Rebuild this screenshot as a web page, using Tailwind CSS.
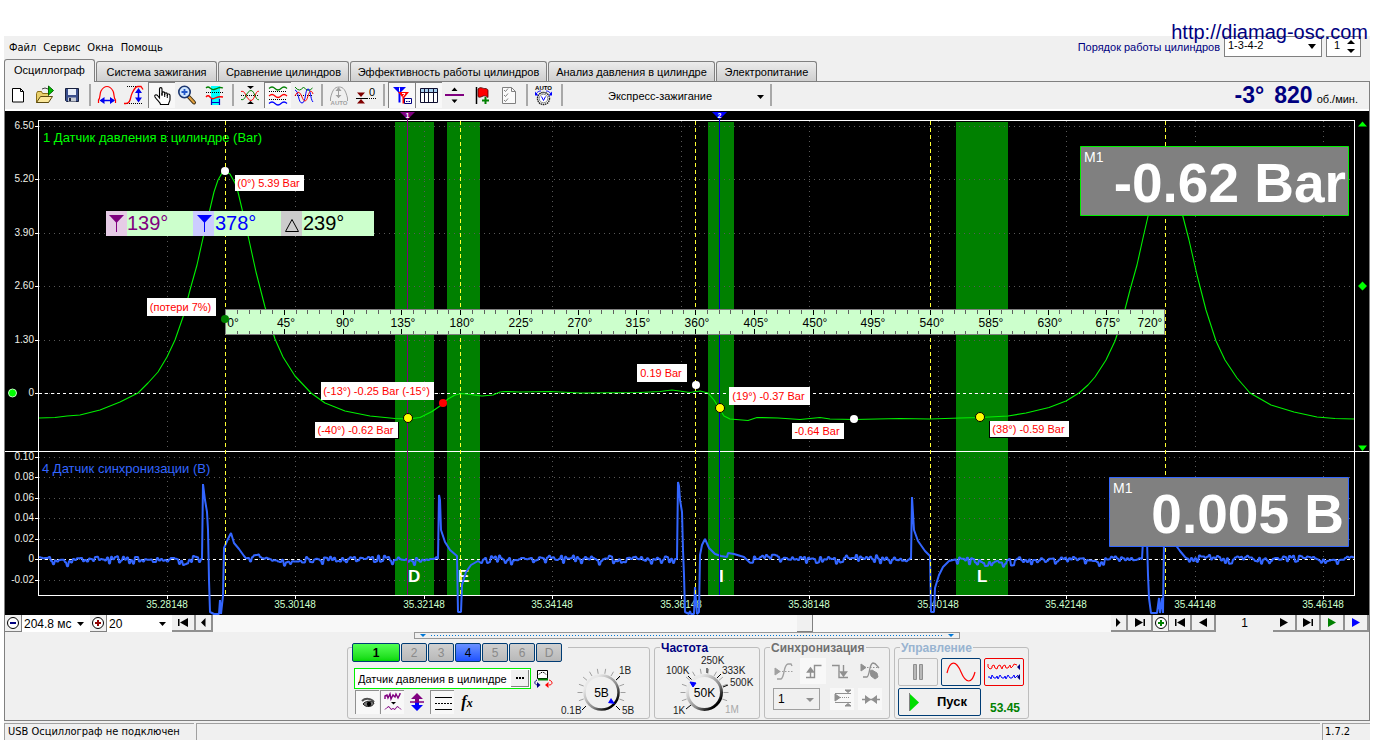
<!DOCTYPE html>
<html lang="ru">
<head>
<meta charset="utf-8">
<title>Diamag — осциллограф</title>
<script src="https://cdn.jsdelivr.net/npm/@tailwindcss/browser@4"></script>
</head>
<body class="bg-white font-['Liberation_Sans',sans-serif] text-[12px] leading-4 text-black">
<div class="relative ml-1 mr-3 pt-9">
  <a href="http://diamag-osc.com" class="absolute right-[2px] top-5 z-10 text-[20px] leading-6 text-[#000080]">http://diamag-osc.com</a>

  <header class="flex h-[23px] items-start justify-between bg-[#f0f0f0]">
    <nav class="flex gap-[7px] pl-[5px] pt-1 font-['DejaVu_Sans_Condensed','DejaVu_Sans',sans-serif] text-[11px]">
      <button>Файл</button><button>Сервис</button><button>Окна</button><button>Помощь</button>
    </nav>
    <div class="flex items-start gap-1 pr-[9px]">
      <label for="order" class="pt-[3px] text-[11px] text-[#000080]">Порядок работы цилиндров</label>
      <div class="relative">
        <select id="order" class="h-[21px] w-[98px] appearance-none border border-[#808080] bg-white pl-[3px] pb-[3px] text-[11px] text-black"><option>1-3-4-2</option></select>
        <svg class="pointer-events-none absolute right-[6px] top-2" width="8" height="5"><path d="M0 0h8L4 5z"/></svg>
      </div>
      <div class="relative">
        <input id="cyl" aria-label="Цилиндр" value="1" class="h-[21px] w-[35px] border border-[#808080] bg-white pb-[3px] pl-[7px] text-[11px]">
        <svg class="pointer-events-none absolute right-[6px] top-[4px]" width="8" height="13"><path d="M0 4h8L4 0zM0 9h8L4 13z"/></svg>
      </div>
    </div>
  </header>

  <div role="tablist" class="flex h-[22px] items-end gap-px bg-[#f0f0f0]">
    <button role="tab" aria-selected="true" class="relative z-[1] -mb-px h-[23px] w-[91px] rounded-t-[3px] border border-b-0 border-[#808080] bg-[#f0f0f0] pb-[2px] text-[11px]">Осциллограф</button>
    <button role="tab" class="h-5 w-[121px] rounded-t-[3px] border border-b-0 border-[#808080] bg-linear-to-b from-[#ececec] to-[#cfcfcf] text-[11px]">Система зажигания</button>
    <button role="tab" class="h-5 w-[131px] rounded-t-[3px] border border-b-0 border-[#808080] bg-linear-to-b from-[#ececec] to-[#cfcfcf] text-[11px]">Сравнение цилиндров</button>
    <button role="tab" class="h-5 w-[197px] rounded-t-[3px] border border-b-0 border-[#808080] bg-linear-to-b from-[#ececec] to-[#cfcfcf] text-[11px]">Эффективность работы цилиндров</button>
    <button role="tab" class="h-5 w-[167px] rounded-t-[3px] border border-b-0 border-[#808080] bg-linear-to-b from-[#ececec] to-[#cfcfcf] text-[11px]">Анализ давления в цилиндре</button>
    <button role="tab" class="h-5 w-[101px] rounded-t-[3px] border border-b-0 border-[#808080] bg-linear-to-b from-[#ececec] to-[#cfcfcf] text-[11px]">Электропитание</button>
  </div>

  <main class="border border-[#808080] bg-[#f0f0f0]">
    <div role="toolbar" class="flex h-[29px] items-start border-b-2 border-white">
      <button aria-label="Новый"><svg class="block" width="27" height="26" viewBox="5 82 27 26"><path d="M12.500 88.500h8l3 3v10.500h-11z" fill="#fff" stroke="#000"/><path d="M20.500 88.500v3h3" fill="none" stroke="#000"/></svg></button>
      <button aria-label="Открыть"><svg class="block" width="27" height="26" viewBox="32 82 27 26"><path d="M36.500 102.500v-9l1-2h4l1 2h6v9z" fill="#e8cf6a" stroke="#8a6d16"/><path d="M36.500 102.500l4-6h12l-4 6z" fill="#fbe79a" stroke="#5b4a10"/><path d="M42 89l3-1 3 1" fill="none" stroke="#444"/><path d="M48.500 86v9l5-4.500z" fill="#00c000" stroke="#006000"/></svg></button>
      <button aria-label="Сохранить"><svg class="block" width="27" height="26" viewBox="59 82 27 26"><path d="M65.500 88.500h13v13h-12l-1-1z" fill="#3a4e8c" stroke="#18203c"/><path d="M68 89h8v6h-8z" fill="#e8eef8"/><path d="M68 97.500h8v4h-8z" fill="#c8ccd4"/><path d="M69 98h2v3h-2z" fill="#202840"/></svg></button>
      <span class="mx-[3px] mt-[2px] h-[22px] w-[2px] bg-[#a8a8a8]"></span>
      <button aria-label="Растянуть по горизонтали"><svg class="block" width="27" height="26" viewBox="94 82 27 26" fill="none"><path d="M98.500 103v-3c2-2 1-6 2.500-9 2-3.500 4-4.500 6-4.500s4 1 6 4.500c1.500 3 .5 7 2.500 9v3" stroke="#f00" stroke-width="1.200"/><path d="M101 100.500h13" stroke="#0000f0" stroke-width="1.500"/><path d="M99.500 100.500l5-3.500v7zM115 100.500l-5-3.500v7z" fill="#0000f0"/></svg></button>
      <button aria-label="Растянуть по вертикали"><svg class="block" width="27" height="26" viewBox="121 82 27 26" fill="none"><path d="M127 86.500h9M127 103.500h16" stroke="#000" stroke-dasharray="1 1"/><path d="M124 103.500h2c5 0 4-6 6-10s3-7 6-7h3l2 3" stroke="#f00" stroke-width="1.300"/><path d="M138.500 90v10" stroke="#0000f0" stroke-width="1.500"/><path d="M138.500 88l-3.500 5h7zM138.500 102.500l-3.500-5h7z" fill="#0000f0"/></svg></button>
      <button aria-label="Рука" aria-pressed="true" class="border-l border-t border-[#808080] bg-[#f8f8f8]"><svg class="block" width="26" height="25" viewBox="149 83 26 25"><path d="M159.500 98v-9c0-1.800 2.500-1.800 2.500 0v6-2c0-1.500 2.700-1.500 2.700 0v2-1c0-1.500 2.600-1.500 2.600.3v1.700-1c0-1.500 2.700-1.500 2.700.5v4c0 2-1.500 3-1.500 5h-8c0-2-3.500-4-5.500-7.500-1-2 1-3 2.500-1.500z" fill="#fff" stroke="#000" stroke-width="1.100"/><path d="M162 96v-3M164.700 97v-3M167.300 98v-3" stroke="#000"/></svg></button>
      <button aria-label="Лупа"><svg class="block" width="27" height="26" viewBox="175 82 27 26"><path d="M188 96l6 6.500" stroke="#3a2a10" stroke-width="4" stroke-linecap="round"/><path d="M189 97l5 5.500" stroke="#e0a040" stroke-width="2" stroke-linecap="round"/><circle cx="184.500" cy="92" r="5.700" fill="#cfe6ff" stroke="#1b3670" stroke-width="1.600"/><path d="M184.500 89v6M181.500 92h6" stroke="#2458c8" stroke-width="1.800"/></svg></button>
      <button aria-label="Фрагмент"><svg class="block" width="27" height="26" viewBox="202 82 27 26" fill="none"><path d="M211 86h9v19h-9z" fill="#0ff"/><path d="M206 88q2-2 4 0t4 1.500 4-1.500 5 0" stroke="#008000" stroke-width="1.300"/><path d="M206 92.500h18" stroke="#000" stroke-dasharray="1 1"/><path d="M206 97q2-2.500 4 0t4 1.500 4-1.500 5 0" stroke="#f00" stroke-width="1.300"/><path d="M211.500 99v6M219.500 99v6M212 102.500h7" stroke="#0000c0" stroke-width="1.200"/></svg></button>
      <span class="mx-[3px] mt-[2px] h-[22px] w-[2px] bg-[#a8a8a8]"></span>
      <button aria-label="Совместить"><svg class="block" width="27" height="26" viewBox="237 82 27 26" fill="none"><path d="M247 86h7l-3.500 3zM247 104h7l-3.500-3z" fill="#000"/><path d="M241 95.500h18" stroke="#000" stroke-dasharray="1 1"/><path d="M241 91.500c3-1 4 2 5 4s3 5 5 5 3-3 4-5 2-5 4-4" stroke="#f00"/><path d="M241 99.500c3 1 4-2 5-4s3-5 5-5 3 3 4 5 2 5 4 4" stroke="#008000"/></svg></button>
      <button aria-label="Разнести" aria-pressed="true" class="border-l border-t border-[#808080] bg-[#f8f8f8]"><svg class="block" width="26" height="25" viewBox="265 83 26 25" fill="none"><path d="M269 88.500q3-3 6 0t6 0 6 0" stroke="#008000" stroke-width="1.200"/><path d="M269 91.500h18M269 99.500h18" stroke="#000" stroke-dasharray="1 1"/><path d="M269 96q3-3 6 0t6 0 6 0" stroke="#f00" stroke-width="1.200"/><path d="M269 103.500q3-3 6 0t6 0 6 0" stroke="#00f" stroke-width="1.200"/></svg></button>
      <button aria-label="Наложить"><svg class="block" width="27" height="26" viewBox="291 82 27 26" fill="none"><path d="M295 87q4.500 6 8.500 0 4.500 6 9 1" stroke="#008000"/><path d="M295 95.500h18" stroke="#000" stroke-dasharray="1 1"/><path d="M295 90c4 1 3 13 7 13s3-14 6-14 2 10 5 13" stroke="#00f"/><path d="M295 96c3-6 5-4 7 1s4 6 6-1 4-5 5-2" stroke="#f00"/></svg></button>
      <span class="mx-[3px] mt-[2px] h-[22px] w-[2px] bg-[#a8a8a8]"></span>
      <button aria-label="Авто масштаб"><svg class="block" width="27" height="26" viewBox="326 82 27 26" fill="none"><path d="M330.500 101v-3c2-8 4-11 8.500-11s6.500 3 8.500 11v3" stroke="#a0a0a0"/><path d="M338.500 88v10" stroke="#a0a0a0"/><path d="M338.500 87l-3 4h6zM338.500 98l-3-3h6z" fill="#a0a0a0"/><text x="339" y="104.500" text-anchor="middle" font-size="6" font-weight="700" fill="#a0a0a0">AUTO</text></svg></button>
      <button aria-label="Обнулить"><svg class="block" width="27" height="26" viewBox="353 82 27 26"><path d="M357 92.500h8l-4 4.500zM357 103.500h8l-4-4.500z" fill="#800000"/><path d="M356 98.500h11" stroke="#000"/><path d="M367 98.500h9" stroke="#000" stroke-dasharray="1 1"/><text x="369" y="96" font-size="11">0</text></svg></button>
      <span class="mx-[3px] mt-[2px] h-[22px] w-[2px] bg-[#a8a8a8]"></span>
      <button aria-label="Маркеры" aria-pressed="true" class="border-l border-t border-[#808080] bg-[#f8f8f8]"><svg class="block" width="26" height="25" viewBox="389 83 26 25"><path d="M393 87h13l-5.500 5.500v10h-2v-10z" fill="#00f"/><path d="M398 92h11l-4.500 5.500v6h-2v-6z" fill="#f00"/><path d="M399.500 87.500v4M402 93.500h3l-2 3" stroke="#fff" fill="none"/><path d="M404.500 98.500h7v5h-7z" fill="#fff" stroke="#000080"/><path d="M406 101.500h4.500" stroke="#000080" stroke-dasharray="1.500 1"/></svg></button>
      <button aria-label="Таблица" aria-pressed="true" class="border-l border-t border-[#808080] bg-[#f8f8f8]"><svg class="block" width="26" height="25" viewBox="416 83 26 25"><path d="M420.500 88.500h17v14h-17z" fill="#fff" stroke="#101030"/><path d="M421 89h16v3.500h-16z" fill="#a8d0f0"/><path d="M420.500 92.500h17M424.500 89v14M428.500 89v14M433.500 89v14" stroke="#101030"/></svg></button>
      <button aria-label="Разделитель"><svg class="block" width="27" height="26" viewBox="442 82 27 26"><path d="M445 94h19v2h-19z" fill="#800080"/><path d="M451.500 91h6l-3-3.500zM451.500 99.500h6l-3 3.500z"/></svg></button>
      <button aria-label="Флаг"><svg class="block" width="27" height="26" viewBox="469 82 27 26"><path d="M476.500 87v17" stroke="#000" stroke-width="1.500"/><path d="M478 89c3-3 5 0 7-.5 2 0 3 1 3 2v7c-2-2-4-2-6-1s-3 1-4 0z" fill="#f00" stroke="#400" stroke-width=".8"/><path d="M485.500 97v7M482 100.500h7" stroke="#008000" stroke-width="2"/></svg></button>
      <button aria-label="Список"><svg class="block" width="27" height="26" viewBox="496 82 27 26" fill="none" stroke="#808080"><path d="M502.500 87.500h9l4 4v12h-13z" fill="#fafafa"/><path d="M511.500 87.500v4h4"/><path d="M504 90l1.500 1.500 2.500-3M504 95l1.500 1.500 2.500-3M504 100l1.500 1.500 2.500-3"/></svg></button>
      <span class="mx-[3px] mt-[2px] h-[22px] w-[2px] bg-[#a8a8a8]"></span>
      <button aria-label="Авто настройка"><svg class="block" width="27" height="26" viewBox="531 82 27 26" fill="none"><text x="543.500" y="90" text-anchor="middle" font-size="6" font-weight="700" fill="#000">AUTO</text><circle cx="543.500" cy="98.500" r="6" fill="#fff" stroke="#222" stroke-dasharray="1.500 .6" stroke-width="1.400"/><circle cx="543.500" cy="98.500" r="4.300" stroke="#888"/><path d="M541.500 96.500l2 4 2-4" stroke="#00f"/><path d="M536 94c2-3 4-3 5-3M551 94c-2-3-4-3-5-3" stroke="#00f"/><path d="M535 91.500v4h3.500zM552 91.500v4h-3.500z" fill="#00f"/></svg></button>
      <span class="mx-[3px] mt-[2px] h-[22px] w-[2px] bg-[#a8a8a8]"></span>
      <div class="relative">
        <select aria-label="Режим" class="h-[27px] w-[203px] appearance-none bg-transparent pl-[42px] text-[11px]"><option>Экспресс-зажигание</option></select>
        <svg class="pointer-events-none absolute right-[5px] top-[13px]" width="7" height="4"><path d="M0 0h7L3.500 4z"/></svg>
      </div>
      <span class="mx-px mt-[2px] h-[22px] w-[2px] bg-[#a8a8a8]"></span>
      <div class="ml-auto flex items-baseline pr-[11px] text-[#000080]">
        <strong class="mr-[10px] text-[23px] leading-[26px]">-3°</strong><strong class="mr-1 text-[23px] leading-[26px]">820</strong><span class="text-[11px] text-black">об./мин.</span>
      </div>
    </div>

    <svg class="block h-auto w-full bg-black" viewBox="5 111 1364 504" id="scope">
      <g fill="#008000"><path d="M395 122h39v473h-39zM447 122h33v473h-33zM708 122h26v473h-26zM956 122h52v473h-52z"/></g>
      <g id="grid" stroke="#585858" stroke-dasharray="1 4" shape-rendering="crispEdges"></g>
      <g stroke="#fff" fill="none" shape-rendering="crispEdges">
        <path d="M38.500 595.500V120.500H1354.500V595.500zM5 451.500H1369"/>
        <path id="ticks"/>
        <path d="M39 393.500H1354M39 559.500H1354" stroke-dasharray="3 3"/>
      </g>
      <text x="43" y="142" font-size="13" fill="#00ff00">1 Датчик давления в цилиндре (Bar)</text>
      <text x="42" y="473" font-size="13" fill="#3366ff">4 Датчик синхронизации (B)</text>
      <g id="ylabels" font-size="10" fill="#f0f0e8" text-anchor="end"></g>
      <g id="xlabels" font-size="10" fill="#ccffcc" text-anchor="middle"></g>
      <g fill="#fff" font-size="17" font-weight="700"><text x="408" y="582">D</text><text x="458" y="582">E</text><text x="719" y="582">I</text><text x="977" y="582">L</text></g>
      <path id="sync" fill="none" stroke="#3366ff" stroke-width="2" stroke-linejoin="bevel"/>
      <path d="M225.500 121V595M460.500 121V595M695.500 121V595M930.500 121V595M1165.500 121V595" stroke="#ffff33" stroke-dasharray="4 3" shape-rendering="crispEdges"/>
      <path d="M407.500 118V595" stroke="#800080"/><path d="M719.500 118V595" stroke="#0000c0"/>
      <path d="M400 112h15l-7.500 7.500z" fill="#800080"/><path d="M712 112h15l-7.500 7.500z" fill="#00f"/>
      <g fill="#fff" font-size="7" font-weight="700" text-anchor="middle"><text x="407.500" y="118">1</text><text x="719.500" y="118">2</text></g>
      <path fill="none" stroke="#00f000" stroke-width="1.100" stroke-linejoin="round" d="M39 418L55 417.500 67 416 80 415 100 410 120 402 138 393 148 383 158 372 167 357 175 340 183 317 190 290 197 265 203 238 210 209 214 192 218 180 222 173 225 171 230 174 235 183 238 192 242 209 249 240 256 272 265 307 275 339 283 357 295 376 311 393 325 403 345 411 370 416 395 418.500 408 419 420 417.500 432 411.500 440 406 448 399 455 395 462 393.500 470 394.500 482 396 493 395 500 392 505 391.500 520 392 550 391.500 580 393 640 392.500 660 391.500 672 390 690 392.500 700 391 708 393 714 400 719 408 724 416 730 419 748 420.500 757 417.500 778 418 800 419.500 820 417.500 830 419 854 419.500 900 418.500 930 419 960 418 980 417.500 1008 416 1026 413 1049 407.500 1066 401 1079 393 1088 385 1095 377 1106 360 1115 341 1123 317 1130 290 1137 265 1143 238 1149 212 1157 181 1165 171 1173 181 1181 209 1189 240 1197 275 1206 310 1216 341 1225 360 1237 378 1250 393 1271 405 1294 412 1317 417 1335 418.500 1354 419"/>
      <g fill="#00ff00"><path d="M1358 126.500h9l-4.500-5zM1358 445.500h9l-4.500 5.500zM1362.500 281.500l4.500 4.500-4.500 4.500-4.500-4.500z"/><circle cx="12.500" cy="393" r="4" stroke="#bfffbf"/></g>

      <g><path d="M106 211h268v25h-268z" fill="#ccffcc"/><path d="M106 211h21v25h-21z" fill="#e6cce6"/><path d="M193 211h21v25h-21z" fill="#ccccff"/><path d="M281 211h21v25h-21z" fill="#ccc"/>
        <path d="M109 215h15l-7.500 8z" fill="#800080"/><path d="M116.500 222v10" stroke="#800080"/><path d="M197 215h15l-7.500 8z" fill="#00f"/><path d="M204.500 222v10" stroke="#00f"/><path d="M285.500 231.500h13l-6.500-12z" fill="none" stroke="#000"/>
        <g font-size="20"><text x="127" y="230" fill="#800080">139°</text><text x="215" y="230" fill="#00f">378°</text><text x="303" y="230">239°</text></g></g>

      <path d="M225.500 309.500h939v25h-939z" fill="#ccffcc" stroke="#808080"/>
      <path id="minor" stroke="#606060" shape-rendering="crispEdges"/><path id="major" stroke="#000" shape-rendering="crispEdges"/>
      <g id="degrees" font-size="12" text-anchor="middle"></g>

      <g id="notes" font-size="11" fill="#ff0000"></g>
      <g fill="#fff"><circle cx="225" cy="171" r="4"/><circle cx="696" cy="385" r="4"/><circle cx="854" cy="419" r="4"/></g>
      <circle cx="225" cy="319" r="4" fill="#008000"/><circle cx="443" cy="403" r="4" fill="#f00"/>
      <g fill="#ff0" stroke="#000"><circle cx="408" cy="418" r="4.500"/><circle cx="720" cy="408" r="4.500"/><circle cx="980" cy="417" r="4.500"/></g>

      <path d="M1080.500 146.500h268v69h-268z" fill="#808080" stroke="#00f000"/><path d="M1109.500 477.500h239v69h-239z" fill="#808080" stroke="#3366ff"/>
      <g fill="#fff"><text x="1084" y="162" font-size="14">M1</text><text x="1113" y="493" font-size="14">M1</text>
      <text x="1346" y="202" font-size="55" font-weight="700" text-anchor="end">-0.62 Bar</text><text x="1344" y="533" font-size="55" font-weight="700" text-anchor="end">0.005 B</text></g>
    </svg>

    <div class="flex h-[17px] items-stretch text-[12px]">
      <button aria-label="Уменьшить" class="w-[17px] border-b border-r border-[#808080] bg-[#f0f0f0]"><svg class="block" width="16" height="16"><circle cx="8" cy="8" r="5.500" fill="#fff" stroke="#000"/><path d="M5 8h6" stroke="#000080" stroke-width="2"/></svg></button>
      <div class="relative"><select aria-label="Развёртка" class="h-[17px] w-[68px] appearance-none bg-white pl-[2px] text-[12px]"><option>204.8 мс</option></select><svg class="pointer-events-none absolute right-[6px] top-[7px]" width="7" height="4"><path d="M0 0h7L3.500 4z"/></svg></div>
      <button aria-label="Увеличить" class="w-[17px] border-b border-r border-[#808080] bg-[#f0f0f0]"><svg class="block" width="16" height="16"><circle cx="8" cy="8" r="5.500" fill="#fff" stroke="#000"/><path d="M5 8h6M8 5v6" stroke="#900000" stroke-width="2"/></svg></button>
      <div class="relative"><select aria-label="Масштаб" class="h-[17px] w-[65px] appearance-none bg-white pl-[2px] text-[12px]"><option>20</option></select><svg class="pointer-events-none absolute right-[6px] top-[7px]" width="7" height="4"><path d="M0 0h7L3.500 4z"/></svg></div>
      <button aria-label="В начало" class="flex w-[24px] items-center justify-center border-b-2 border-r-2 border-[#909090] bg-[#f0f0f0]"><svg width="12" height="9"><path d="M1 1h1.500v7H1zM11 0v9L3 4.500z"/></svg></button>
      <button aria-label="Назад" class="flex w-[17px] items-center justify-center border-b-2 border-r-2 border-[#909090] bg-[#f0f0f0]"><svg width="5" height="9"><path d="M4.500 0v9L0 4.500z"/></svg></button>
      <input type="range" aria-label="Прокрутка" min="0" max="1000" value="662" class="h-[17px] min-w-0 flex-1 appearance-none bg-[#f8f8f8] [&::-webkit-slider-thumb]:h-[17px] [&::-webkit-slider-thumb]:w-4 [&::-webkit-slider-thumb]:appearance-none [&::-webkit-slider-thumb]:border-b [&::-webkit-slider-thumb]:border-r [&::-webkit-slider-thumb]:border-[#808080] [&::-webkit-slider-thumb]:bg-[#f0f0f0]">
      <button aria-label="Вперёд" class="flex w-[17px] items-center justify-center border-b-2 border-r-2 border-[#909090] bg-[#f0f0f0]"><svg width="5" height="9"><path d="M0 0v9l4.500-4.500z"/></svg></button>
      <button aria-label="В конец" class="flex w-[25px] items-center justify-center border-b-2 border-r-2 border-[#909090] bg-[#f0f0f0]"><svg width="12" height="9"><path d="M9.500 1H11v7H9.500zM1 0v9l8-4.500z"/></svg></button>
      <button aria-label="Добавить" class="w-[16px] border-b border-r border-[#808080] bg-[#f0f0f0]"><svg class="block" width="16" height="16"><circle cx="8" cy="8" r="5.500" fill="#fff" stroke="#000"/><path d="M5 8h6M8 5v6" stroke="#008000" stroke-width="2"/></svg></button>
      <button aria-label="Первый кадр" class="flex w-[23px] items-center justify-center border-b-2 border-r-2 border-[#909090] bg-[#f0f0f0]"><svg width="12" height="9"><path d="M1 1h1.500v7H1zM11 0v9L3 4.500z"/></svg></button>
      <button aria-label="Предыдущий кадр" class="flex w-[24px] items-center justify-center border-b-2 border-r-2 border-[#909090] bg-[#f0f0f0]"><svg width="8" height="9"><path d="M8 0v9L0 4.500z"/></svg></button>
      <output class="w-[57px] text-center leading-[17px]">1</output>
      <button aria-label="Следующий кадр" class="flex w-[24px] items-center justify-center border-b-2 border-r-2 border-[#909090] bg-[#f0f0f0]"><svg width="8" height="9"><path d="M0 0v9l8-4.500z"/></svg></button>
      <button aria-label="Последний кадр" class="flex w-[24px] items-center justify-center border-b-2 border-r-2 border-[#909090] bg-[#f0f0f0]"><svg width="12" height="9"><path d="M9.500 1H11v7H9.500zM1 0v9l8-4.500z"/></svg></button>
      <button aria-label="Воспроизвести" class="flex w-[24px] items-center justify-center border-b-2 border-r-2 border-[#909090] bg-[#f0f0f0]"><svg width="8" height="9"><path d="M0 0v9l8-4.500z" fill="#008000"/></svg></button>
      <button aria-label="Воспроизвести быстро" class="flex w-[24px] items-center justify-center border-b-2 border-r-2 border-[#909090] bg-[#f0f0f0]"><svg width="8" height="9"><path d="M0 0v9l8-4.500z" fill="#00f"/></svg></button>
    </div>

    <button aria-label="Свернуть панель" class="mx-auto flex h-[7px] w-[546px] items-center gap-[5px] border border-[#989898] px-[5px]"><svg width="6" height="3"><path d="M0 0h6L3 3z" fill="#0078d7"/></svg><svg class="min-w-0 flex-1" height="1"><path d="M0 .5H2000" stroke="#0078d7" stroke-dasharray="1 2"/></svg><svg width="6" height="3"><path d="M0 0h6L3 3z" fill="#0078d7"/></svg></button>

    <div class="flex justify-center gap-1 pb-px pl-[2px] pt-2">
      <section class="flex h-[72px] w-[303px] rounded-[3px] border border-[#bdbdbd] pl-[4px]">
        <div class="w-[205px]">
          <div class="-mt-[5px] flex h-[19px] w-max gap-px bg-[#f0f0f0] pr-[6px] text-[12px] text-[#8a8a8a]">
            <button class="w-[48px] rounded-[2px] border border-[#003c74] bg-linear-to-b from-[#50ff50] to-[#00d800] font-bold text-black">1</button>
            <button class="w-[26px] rounded-[2px] border border-[#003c74] bg-linear-to-b from-[#d0d0d0] to-[#b8b8b8]">2</button>
            <button class="w-[26px] rounded-[2px] border border-[#003c74] bg-linear-to-b from-[#d0d0d0] to-[#b8b8b8]">3</button>
            <button class="w-[26px] rounded-[2px] border border-[#003c74] bg-linear-to-b from-[#6a90ff] to-[#2050ff] text-black">4</button>
            <button class="w-[26px] rounded-[2px] border border-[#003c74] bg-linear-to-b from-[#d0d0d0] to-[#b8b8b8]">5</button>
            <button class="w-[26px] rounded-[2px] border border-[#003c74] bg-linear-to-b from-[#d0d0d0] to-[#b8b8b8]">6</button>
            <button class="w-[26px] rounded-[2px] border border-[#003c74] bg-linear-to-b from-[#d0d0d0] to-[#b8b8b8]">D</button>
          </div>
          <div class="mt-[6px] flex items-center gap-[3px] pl-[2px]">
            <div class="flex h-[21px] w-[177px] items-stretch border border-[#00f000] bg-white p-px">
              <input aria-label="Датчик" value="Датчик давления в цилиндре" class="min-w-0 flex-1 pl-[2px] text-[11px]">
              <button aria-label="Выбрать датчик" class="flex w-[18px] items-center justify-center border-b border-r border-[#808080] bg-[#f0f0f0]"><svg width="8" height="2"><path d="M0 0h2v2H0zM3 0h2v2H3zM6 0h2v2H6z"/></svg></button>
            </div>
            <button aria-label="Инвертировать"><svg class="block" width="19" height="20" viewBox="535 669 19 20" fill="none"><path d="M538.500 670.500h10v8h-10z" fill="#fff" stroke="#000"/><path d="M540 674.500c2-3 5-3 7 0" stroke="#000" stroke-dasharray="1.500 1"/><path d="M539 679.500h10" stroke="#008000" stroke-width="2"/><path d="M538 680c-3 1-3 5 1 5" stroke="#000080"/><path d="M550 680c4 1 4 5 0 5" stroke="#f00"/><path d="M538 682v6l3.500-3z" fill="#000080"/><path d="M549.500 682v6l-3.500-3z" fill="#f00"/></svg></button>
          </div>
          <div class="mt-px flex gap-px pl-[3px]">
            <button aria-label="Видимость" aria-pressed="true" class="border-l border-t border-[#909090] bg-[#f8f8f8]"><svg class="block" width="23" height="23" viewBox="356 691 23 23"><path d="M362 701c3-3 9-3 12 1" fill="none" stroke="#505050" stroke-width="2"/><path d="M363 704c2-3 8-4 11-1-1 4-8 5-11 1z" fill="#777" stroke="#222"/><circle cx="369" cy="704" r="2.200"/></svg></button>
            <button aria-label="Фильтр" aria-pressed="true" class="border-l border-t border-[#909090] bg-[#f8f8f8]"><svg class="block" width="23" height="23" viewBox="381 691 23 23" fill="none" stroke="#800080"><path d="M385 699v-3l2-1 1 3 2-4 1 5 2-4 2 2 1-3 2 4 2-4v-1" stroke-width="1.400"/><path d="M391 702h5l-2.500 2.500z" fill="#000" stroke="none"/><path d="M385 709.500l2-2 2-1 2 3 2-1 2 1 2-3 2 1 2 2"/></svg></button>
            <button aria-label="Вертикальная шкала"><svg class="block" width="24" height="24" viewBox="405 690 24 24"><path d="M417 693l6 6h-4v3h-4v-3h-4z" fill="#800080"/><path d="M417 711l6-6h-4v-3h-4v3h-4z" fill="#00f"/><path d="M410 702h14" stroke="#800080" stroke-width="1.500"/></svg></button>
            <button aria-label="Линии" aria-pressed="true" class="border-l border-t border-[#909090] bg-[#f8f8f8]"><svg class="block" width="23" height="23" viewBox="431 691 23 23" stroke="#000"><path d="M435 697.500h17M435 709.500h17"/><path d="M435 703.500h17" stroke-dasharray="2 1"/></svg></button>
            <button class="h-6 w-6 font-['Liberation_Serif',serif] text-[16px] font-bold italic">f<span class="text-[12px]">x</span></button>
          </div>
        </div>
        <svg class="mt-[10px]" width="90" height="58" viewBox="556 658 90 58" role="img" aria-label="Чувствительность 5В">
          <defs><linearGradient id="rim" x1="0" y1="0" x2="1" y2="1"><stop offset=".2" stop-color="#e8e8e8"/><stop offset=".6" stop-color="#888"/><stop offset=".85" stop-color="#000"/></linearGradient></defs>
          <g id="k1" stroke="#a0a0a0"></g><path d="M615 680l4-4M585 706l-4 4M615 706l4 4" stroke="#000"/>
          <circle cx="600.500" cy="692.500" r="17" fill="#f0f0f0" stroke="url(#rim)" stroke-width="2.500"/>
          <path d="M607 703l3-5 4 6z" fill="#00f"/><text x="600.500" y="697" font-size="12" text-anchor="middle">5B</text>
          <g font-size="10" fill="#222"><text x="618" y="674">1B</text><text x="560" y="714">0.1B</text><text x="621" y="714">5B</text></g>
        </svg>
      </section>

      <section class="relative h-[72px] w-[106px] rounded-[3px] border border-[#bdbdbd]">
        <h3 class="absolute -top-[7px] left-[5px] z-[1] bg-[#f0f0f0] px-px text-[12px] font-bold leading-[14px] text-[#000080]">Частота</h3>
        <svg class="mt-[6px] block w-full" height="62" viewBox="655 654 104 62" role="img" aria-label="Частота 50K">
          <g id="k2" stroke="#a0a0a0"></g><path d="M692 680l-4-4M707 673v-5M717 678l4-4M723 687l5-2M691 705l-5 4" stroke="#000"/>
          <circle cx="704.500" cy="692.500" r="17" fill="#f0f0f0" stroke="url(#rim)" stroke-width="3"/>
          <path d="M690 682l6 1-3 4z" fill="#00f" stroke="#00f"/><text x="704.500" y="697" font-size="12" text-anchor="middle">50K</text>
          <g font-size="10" fill="#222"><text x="701" y="664">250K</text><text x="666" y="674">100K</text><text x="722" y="674">333K</text><text x="730" y="686">500K</text><text x="673" y="714">1K</text><text x="725" y="713" fill="#a8a8a8">1M</text></g>
        </svg>
      </section>

      <section class="relative h-[72px] w-[126px] rounded-[3px] border border-[#bdbdbd] px-[6px] pt-[10px]">
        <h3 class="absolute -top-[7px] left-[5px] bg-[#f0f0f0] px-px text-[12px] font-bold leading-[14px] text-[#707070]">Синхронизация</h3>
        <div class="flex justify-between">
          <button aria-label="По уровню"><svg class="block" width="26" height="26" viewBox="772 658 26 26" fill="none" stroke="#a0a0a0"><path d="M776 668l5 3.500-5 3.500z" fill="#a0a0a0"/><path d="M777 671.500h17" stroke-dasharray="1.500 1.500"/><path d="M778 679h4c4-2 2-14 7-15h3l1 2" stroke-width="1.400"/></svg></button>
          <button aria-label="По фронту" class="bg-[#f8f8f8]"><svg class="block" width="26" height="24" viewBox="801 659 26 24" fill="none" stroke="#909090" stroke-width="1.400"><path d="M807 677.500h8.500v-12h7"/><path d="M811.500 678v-8"/><path d="M811.500 668l-3 4h6z" fill="#909090"/></svg></button>
          <button aria-label="По спаду"><svg class="block" width="26" height="26" viewBox="830 658 26 26" fill="none" stroke="#909090" stroke-width="1.400"><path d="M834 665.500h7v12h9"/><path d="M845.500 665v8"/><path d="M845.500 676l-3-4h6z" fill="#909090"/></svg></button>
          <button aria-label="Ручная"><svg class="block" width="26" height="26" viewBox="857 658 26 26" fill="none" stroke="#909090"><path d="M861 664l5 3.500-5 3.500z" fill="#909090"/><path d="M861 667.500h18" stroke-dasharray="1.500 1.500"/><path d="M863 677h4c3-2 2-13 6-14 3 0 4 3 6 5" stroke-width="1.300"/><path d="M870 671l2-1 5 3 1 4-3 2-4-3z" fill="#909090"/></svg></button>
        </div>
        <div class="mt-[4px] flex items-center">
          <div class="relative ml-[2px] mr-[10px]"><select aria-label="Канал синхронизации" class="block h-[22px] w-[47px] appearance-none border border-[#a0a0a0] bg-[#f0f0f0] pl-1 text-[12px]"><option>1</option></select><svg class="pointer-events-none absolute right-[6px] top-[10px]" width="8" height="4"><path d="M0 0h8L4 4z" fill="#909090"/></svg></div>
          <button aria-label="Уровень" class="mr-[4px] bg-[#f8f8f8]"><svg class="block" width="24" height="22" viewBox="830 689 24 22" fill="none" stroke="#909090"><path d="M835 695l5 3.500-5 3.500z" fill="#909090"/><path d="M835 694.500h16M835 703.500h16"/><path d="M840 698.500h10" stroke-dasharray="1 1"/><path d="M845 691h6l-3 2.500zM845 707h6l-3-2.500z" fill="#909090"/></svg></button>
          <button aria-label="Сжать" class="bg-[#f8f8f8]"><svg class="block" width="24" height="22" viewBox="858 689 24 22"><path d="M862 700.500h18" stroke="#909090" stroke-width="1.500"/><path d="M865 696l6 4.500-6 4.500zM877 696l-6 4.500 6 4.500z" fill="#909090"/></svg></button>
        </div>
      </section>

      <section class="relative h-[72px] w-[135px] rounded-[3px] border border-[#bdbdbd] pl-[3px] pt-[10px]">
        <h3 class="absolute -top-[7px] left-[5px] bg-[#f0f0f0] px-px text-[12px] font-bold leading-[14px] text-[#99b4d1]">Управление</h3>
        <div class="flex gap-[3px]">
          <button aria-label="Пауза" class="flex h-7 w-10 items-center justify-center rounded-[2px] border border-[#bdbdbd]"><svg width="12" height="16"><path d="M1.500.5h3v15h-3zM7.500.5h3v15h-3z" fill="#b8b8b8" stroke="#909090"/></svg></button>
          <button aria-label="Одиночный" class="flex h-7 w-10 items-center justify-center rounded-[2px] border border-[#003c74]"><svg width="30" height="20" fill="none" stroke="#f00" stroke-width="1.200"><path d="M1 11C4-2 10-2 15 10s11 12 14 0"/></svg></button>
          <button aria-label="Непрерывный" class="flex h-7 w-10 items-center justify-center rounded-[2px] border border-[#f00000]"><svg width="34" height="20" fill="none"><path d="M1 2v3l2 2 2-1v-2l2-1 1 3 2 1 1-3 2-1 2 4 1-3 2-1 1 3 2 0 2-3 1 3 2-2 1-2 3 1" stroke="#f00"/><path d="M1 15h2l1 2 1-4 2 3h2l1-2 1 3 2-4 2 3h2l1-2 1 3 2-4 2 3h2l2-3 1 3 3-3" stroke="#00f"/><path d="M33 2v6l-3-3zM33 12v6l-3-3z" fill="#000080"/></svg></button>
        </div>
        <div class="mt-[2px] flex items-end">
          <button class="flex h-7 w-[83px] items-center rounded-[2px] border border-[#003c74] pl-[9px] text-[13px] font-bold"><svg class="mr-[17px]" width="12" height="18"><path d="M2 1v17l9-8.500z" fill="#0d0"/><path d="M1.500 0v18" stroke="#808080"/></svg>Пуск</button>
          <output class="ml-[9px] text-[12px] font-bold text-[#008000]">53.45</output>
        </div>
      </section>
    </div>
  </main>

  <footer class="flex h-[19px] gap-[2px] bg-[#f0f0f0] pt-[2px] font-['DejaVu_Sans_Condensed','DejaVu_Sans',sans-serif] text-[11px]">
    <p class="w-[190px] border-l border-t border-[#a0a0a0] pl-[3px]">USB Осциллограф не подключен</p>
    <p class="flex-1 border-l border-t border-[#a0a0a0]"></p>
    <p class="w-[48px] border-l border-t border-[#a0a0a0] pl-[2px] text-[11px]">1.7.2</p>
  </footer>
</div>

<script>
const $ = id => document.getElementById(id);
const rows1 = [[126,'6.50'],[179,'5.20'],[233,'3.90'],[286,'2.60'],[340,'1.30'],[393,'0']];
const rows2 = [[457,'0.10'],[477,'0.08'],[498,'0.06'],[518,'0.04'],[539,'0.02'],[559,'0'],[580,'-0.02']];
const cols = [167,295,424,552,681,809,938,1066,1195,1323];
let grid = '', yl = '', ticks = '', xl = '';
for (const [y, t] of rows1.concat(rows2)) {
  grid += `<path d="M39 ${y}.5H1354"/>`;
  ticks += `M35 ${y}.5h4`;
  yl += `<text x="34" y="${y + 3}">${t}</text>`;
}
cols.forEach((x, i) => {
  grid += `<path d="M${x}.5 121V595"/>`;
  ticks += `M${x}.5 595v4`;
  xl += `<text x="${x}" y="608">35.${28148 + i * 2000}</text>`;
});
$('grid').innerHTML = grid; $('ylabels').innerHTML = yl; $('xlabels').innerHTML = xl;
$('ticks').setAttribute('d', ticks);

// crank angle ruler: one tick per 9 degrees, a label per 45
let minor = '', major = '', deg = '';
for (let i = 0; i <= 80; i++) {
  const x = Math.floor(225.5 + i * 11.75) + 0.5;
  if (i % 5) minor += `M${x} 310v4M${x} 334v-3`;
  else {
    if (i && i < 80) major += `M${x} 310v5M${x} 334v-5`;
    const lx = i === 0 ? 233 : i === 80 ? 1150 : x + 1.5;
    deg += `<text x="${lx}" y="327">${i * 9}°</text>`;
  }
}
$('minor').setAttribute('d', minor); $('major').setAttribute('d', major); $('degrees').innerHTML = deg;

const notes = [[235,175,69,16,'(0°) 5.39 Bar'],[147,298,69,18,'(потери 7%)'],[321,382,113,18,'(-13°) -0.25 Bar (-15°)'],[315,422,83,16,'(-40°) -0.62 Bar',1],[637,364,50,18,'0.19 Bar'],[729,387,81,18,'(19°) -0.37 Bar'],[792,423,52,16,'-0.64 Bar'],[990,421,79,16,'(38°) -0.59 Bar',1]];
$('notes').innerHTML = notes.map(([x, y, w, h, t, s]) => (s ? `<rect x="${x - 1}" y="${y}" width="${w + 2}" height="${h + 1}" fill="#000"/>` : '') + `<rect x="${x}" y="${y}" width="${w}" height="${h}" fill="#fff"/><text x="${x + w / 2 - 1}" y="${y + h / 2 + 4}" text-anchor="middle">${t}</text>`).join('');

// sync sensor signal: noise around zero with the pulses at fixed places
let seed = 7;
const rnd = () => (seed = (seed * 16807) % 2147483647) / 2147483647;
const noise = (a, b) => {
  const p = []; let drift = 0;
  for (let x = a; x < b; x += 2) {
    drift += (rnd() - 0.5) * 2 - drift * 0.1;
    const y = 559 + drift + (rnd() < 0.14 ? 4.5 : (rnd() - 0.5) * 4);
    p.push([x, y], [x + 1, y]);
  }
  return p;
};
const pts = [
  ...noise(39, 202), [202,559],[203,484],[205,500],[207,512],[208,530],[209,580],[210,612],[214,614],[219,614],[220,600],[221,614],[223,596],[224,548],[227,541],[231,533],[234,543],[239,549],[244,556],
  ...noise(246, 437), [438,559],[439,495],[440,500],[441,530],[445,542],[450,550],[457,556],[458,612],[461,612],[462,585],[466,572],[471,565],[478,561],
  ...noise(481, 677), [677,559],[678,482],[679,486],[680,500],[682,512],[683,550],[684,575],[685,612],[689,614],[690,611],[691,614],[694,614],[695,587],[697,614],[699,612],[700,555],[702,545],[705,539],[709,548],[715,554],[721,556],[727,557],[728,553],[734,554],[744,557],
  ...noise(750, 911), [911,559],[912,497],[914,530],[918,541],[925,551],[930,556],[931,612],[934,612],[935,588],[939,575],[943,567],[949,561],
  ...noise(955, 1141), [1142,559],[1143,540],[1147,540],[1148,575],[1149,598],[1151,613],[1157,613],[1159,598],[1160,613],[1162,598],[1163,613],[1164,540],[1172,540],[1180,551],[1185,557],
  ...noise(1187, 1354)];
$('sync').setAttribute('d', 'M' + pts.map(([x, y]) => x + ' ' + y.toFixed(1)).join('L'));

// scale marks around the two knobs
for (const [id, cx] of [['k1', 600.5], ['k2', 704.5]]) {
  let s = '';
  for (let a = 160; a <= 380; a += 20) {
    const c = Math.cos(a * Math.PI / 180), n = Math.sin(a * Math.PI / 180);
    s += `<path d="M${cx + 19 * c} ${692.5 + 19 * n}L${cx + 24 * c} ${692.5 + 24 * n}"/>`;
  }
  $(id).innerHTML = s;
}
</script>
</body>
</html>
